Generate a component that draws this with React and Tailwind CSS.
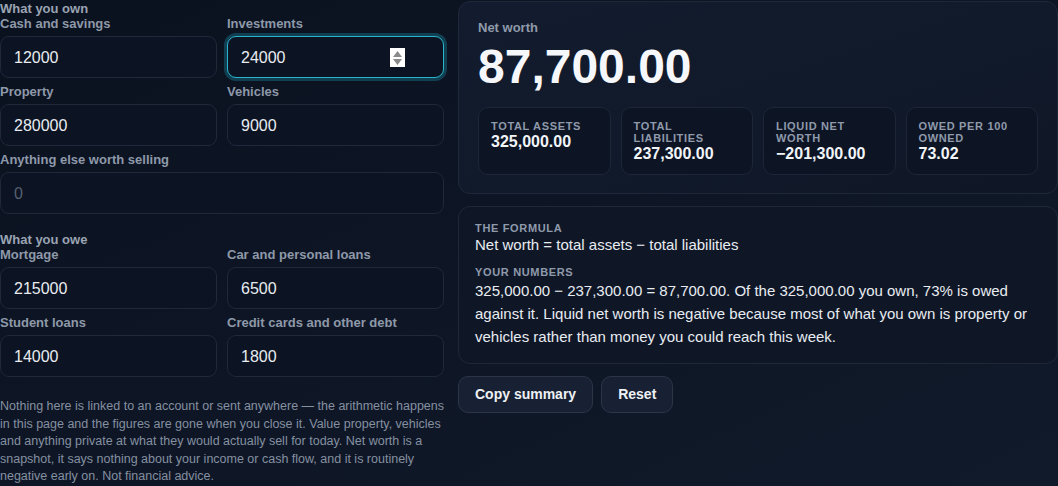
import React, { useState } from "react";

const font = { fontFamily: '"Liberation Sans", Arial, sans-serif' };

const Field = ({ label, value, placeholder, focused, onChange }) => (
	<label className="flex flex-col">
		<span className="text-[13px] leading-[15px] font-bold text-[#8e99a9]">{label}</span>
		<div className="relative mt-[5px]">
			<input
				type="text"
				inputMode="decimal"
				value={value}
				placeholder={placeholder}
				onChange={(e) => onChange(e.target.value)}
				className={
					focused
						? "w-full h-[42px] rounded-[9px] border border-[#2bb5cc] bg-[#0c1322] px-[13px] pt-[1px] text-[16px] text-[#e8ecf1] outline-none shadow-[0_0_0_3px_rgba(34,180,210,0.28)] placeholder:text-[#566070]"
						: "w-full h-[42px] rounded-[9px] border border-[#1f2939] bg-[#0c1322] px-[13px] pt-[1px] text-[16px] text-[#e8ecf1] outline-none placeholder:text-[#566070]"
				}
			/>
			{focused && (
				<span className="absolute left-[163px] top-[12px] flex h-[19px] w-[15px] flex-col items-center justify-center gap-[2px] bg-white">
					<svg width="9" height="6" viewBox="0 0 9 6">
						<path d="M4.5 0 L9 6 L0 6 Z" fill="#8a8a8a" />
					</svg>
					<svg width="9" height="6" viewBox="0 0 9 6">
						<path d="M0 0 L9 0 L4.5 6 Z" fill="#8a8a8a" />
					</svg>
				</span>
			)}
		</div>
	</label>
);

const Stat = ({ label, value }) => (
	<div className="rounded-[10px] border border-[#1c2637] bg-[#0d1424] px-[12px] pt-[12px] pb-[10px]">
		<div className="text-[11px] leading-[12px] font-bold uppercase tracking-[0.06em] text-[#8f9aab]">{label}</div>
		<div className="text-[16px] leading-[20px] font-bold text-[#f1f4f8]">{value}</div>
	</div>
);

export default function App() {
	const [v, setV] = useState({
		cash: "12000",
		inv: "24000",
		prop: "280000",
		veh: "9000",
		other: "",
		mort: "215000",
		car: "6500",
		student: "14000",
		cards: "1800",
	});
	const set = (k) => (val) => setV({ ...v, [k]: val });

	return (
		<div
			style={font}
			className="min-h-screen w-full bg-gradient-to-br from-[#0a111e] via-[#0e1626] to-[#111a2a] text-[#e8ecf1]"
		>
			<div className="flex gap-[14px] pt-[1px]">
				<div className="flex w-[444px] shrink-0 flex-col">
					<div className="text-[13px] leading-[15px] font-bold text-[#9aa4b3]">What you own</div>
					<div className="grid grid-cols-2 gap-x-[10px] gap-y-[6px]">
						<Field label="Cash and savings" value={v.cash} onChange={set("cash")} />
						<Field label="Investments" value={v.inv} onChange={set("inv")} focused />
						<Field label="Property" value={v.prop} onChange={set("prop")} />
						<Field label="Vehicles" value={v.veh} onChange={set("veh")} />
						<div className="col-span-2">
							<Field label="Anything else worth selling" value={v.other} placeholder="0" onChange={set("other")} />
						</div>
					</div>

					<div className="mt-[18px] text-[13px] leading-[15px] font-bold text-[#9aa4b3]">What you owe</div>
					<div className="grid grid-cols-2 gap-x-[10px] gap-y-[6px]">
						<Field label="Mortgage" value={v.mort} onChange={set("mort")} />
						<Field label="Car and personal loans" value={v.car} onChange={set("car")} />
						<Field label="Student loans" value={v.student} onChange={set("student")} />
						<Field label="Credit cards and other debt" value={v.cards} onChange={set("cards")} />
					</div>

					<p className="mt-[21px] text-[12.5px] leading-[17.5px] text-[#8590a0]">
						Nothing here is linked to an account or sent anywhere — the arithmetic happens in this page and
						the figures are gone when you close it. Value property, vehicles and anything private at what they
						would actually sell for today. Net worth is a snapshot, it says nothing about your income or cash
						flow, and it is routinely negative early on. Not financial advice.
					</p>
				</div>

				<div className="flex min-w-0 flex-1 flex-col">
					<div className="rounded-[12px] border border-[#1e2839] bg-gradient-to-br from-[#131c2e] to-[#0f1727] px-[19px] pt-[18px] pb-[18px]">
						<div className="text-[13px] leading-[16px] font-bold text-[#8f9aab]">Net worth</div>
						<div className="mt-[7px] text-[48px] leading-[48px] font-bold text-[#f5f7fa]">87,700.00</div>
						<div className="mt-[16px] grid grid-cols-4 gap-[10px]">
							<Stat label="Total assets" value="325,000.00" />
							<Stat label="Total liabilities" value="237,300.00" />
							<Stat label="Liquid net worth" value="−201,300.00" />
							<Stat label="Owed per 100 owned" value="73.02" />
						</div>
					</div>

					<div className="mt-[12px] rounded-[12px] border border-[#1e2839] bg-[#0f1727] px-[16px] pt-[14px] pb-[15px]">
						<div className="text-[11px] leading-[14px] font-bold uppercase tracking-[0.06em] text-[#8f9aab]">
							The formula
						</div>
						<div className="text-[15px] leading-[20px] text-[#e8ecf1]">Net worth = total assets − total liabilities</div>
						<div className="mt-[10px] text-[11px] leading-[14px] font-bold uppercase tracking-[0.06em] text-[#8f9aab]">
							Your numbers
						</div>
						<p className="text-[15px] leading-[23px] text-[#e8ecf1]">
							325,000.00 − 237,300.00 = 87,700.00. Of the 325,000.00 you own, 73% is owed against it. Liquid net
							worth is negative because most of what you own is property or vehicles rather than money you could
							reach this week.
						</p>
					</div>

					<div className="mt-[12px] flex gap-[8px]">
						<button className="h-[37px] rounded-[10px] border border-[#2a3547] bg-[#182133] px-4 text-[14px] font-bold text-[#eef1f5]">
							Copy summary
						</button>
						<button className="h-[37px] rounded-[10px] border border-[#2a3547] bg-[#182133] px-4 text-[14px] font-bold text-[#eef1f5]">
							Reset
						</button>
					</div>
				</div>
			</div>
		</div>
	);
}
